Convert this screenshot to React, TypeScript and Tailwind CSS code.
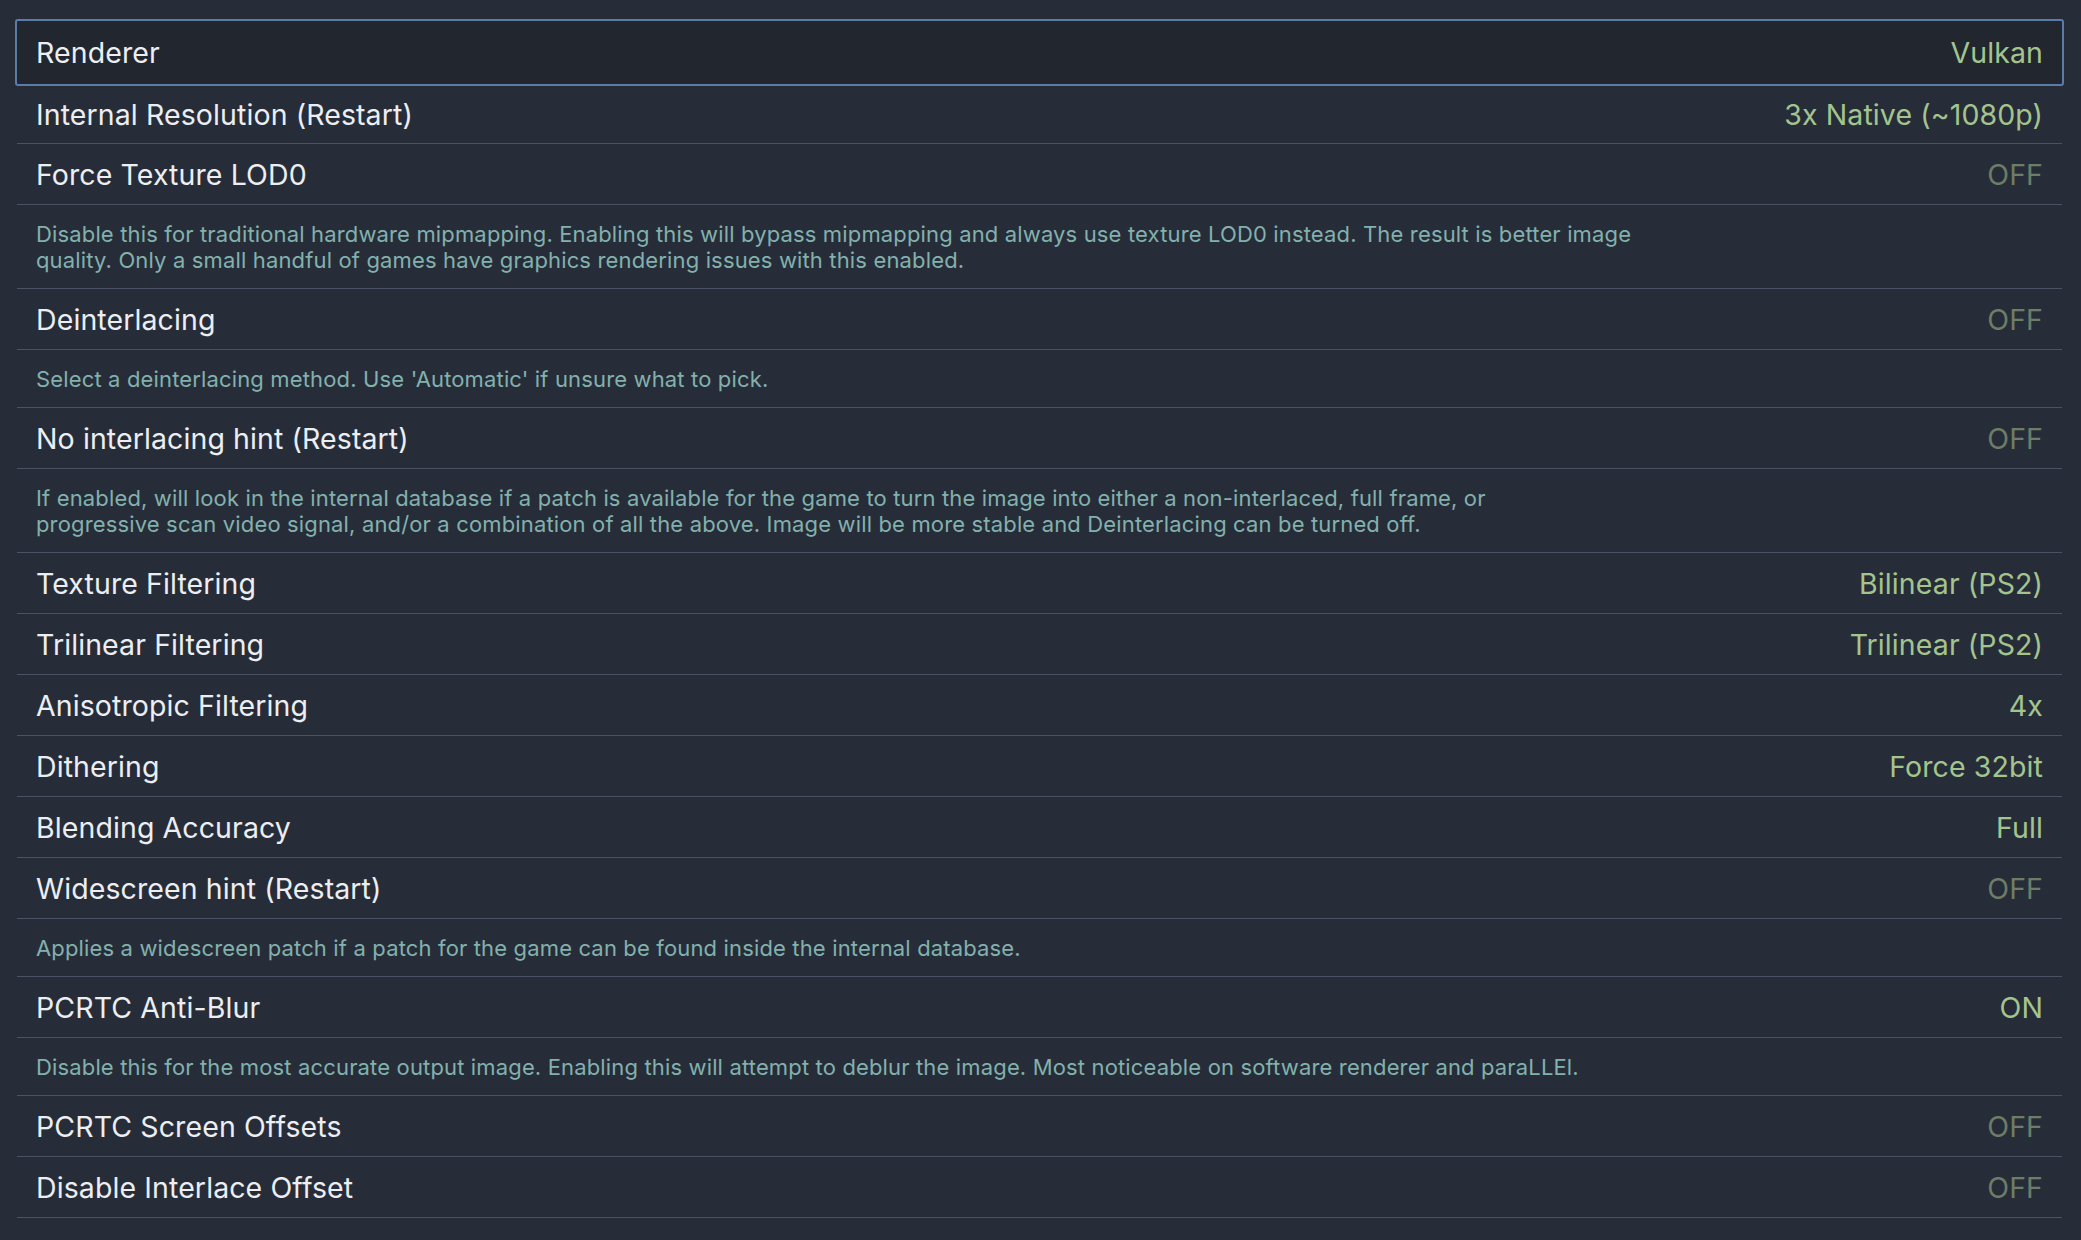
import React from "react";

type Item = {
  label: string;
  value: string;
  on?: boolean;
  desc?: string[];
  focused?: boolean;
};

const items: Item[] = [
  { label: "Renderer", value: "Vulkan", on: true, focused: true },
  { label: "Internal Resolution (Restart)", value: "3x Native (~1080p)", on: true },
  {
    label: "Force Texture LOD0",
    value: "OFF",
    desc: [
      "Disable this for traditional hardware mipmapping. Enabling this will bypass mipmapping and always use texture LOD0 instead. The result is better image",
      "quality. Only a small handful of games have graphics rendering issues with this enabled.",
    ],
  },
  {
    label: "Deinterlacing",
    value: "OFF",
    desc: ["Select a deinterlacing method. Use 'Automatic' if unsure what to pick."],
  },
  {
    label: "No interlacing hint (Restart)",
    value: "OFF",
    desc: [
      "If enabled, will look in the internal database if a patch is available for the game to turn the image into either a non-interlaced, full frame, or",
      "progressive scan video signal, and/or a combination of all the above. Image will be more stable and Deinterlacing can be turned off.",
    ],
  },
  { label: "Texture Filtering", value: "Bilinear (PS2)", on: true },
  { label: "Trilinear Filtering", value: "Trilinear (PS2)", on: true },
  { label: "Anisotropic Filtering", value: "4x", on: true },
  { label: "Dithering", value: "Force 32bit", on: true },
  { label: "Blending Accuracy", value: "Full", on: true },
  {
    label: "Widescreen hint (Restart)",
    value: "OFF",
    desc: ["Applies a widescreen patch if a patch for the game can be found inside the internal database."],
  },
  {
    label: "PCRTC Anti-Blur",
    value: "ON",
    on: true,
    desc: [
      "Disable this for the most accurate output image. Enabling this will attempt to deblur the image. Most noticeable on software renderer and paraLLEl.",
    ],
  },
  { label: "PCRTC Screen Offsets", value: "OFF" },
  { label: "Disable Interlace Offset", value: "OFF" },
];

export default function App() {
  return (
    <div
      className="min-h-screen w-full bg-[#272d38] pt-[19px] pl-[17px] pr-[19px] overflow-hidden"
      style={{ fontFamily: "Inter, 'Noto Sans', sans-serif" }}
    >
      {items.map((it, i) => (
        <div key={i}>
          {it.focused ? (
            <div className="-mx-[2px] h-[67px] flex items-center justify-between border-2 border-[#5a7ca6] rounded-[3px] bg-[#22262f] px-[19px] pt-[2px]">
              <span className="text-[28.5px] tracking-[0.1px] text-[#eceef2]">{it.label}</span>
              <span className="text-[28.5px] tracking-[0.1px] text-[#a4c48e]">{it.value}</span>
            </div>
          ) : (
            <div
              className={`flex items-center justify-between px-[19px] pt-[2px] border-b border-[#4a5264] ${
                i === 1 ? "h-[58px]" : "h-[61px]"
              }`}
            >
              <span className="text-[28.5px] tracking-[0.1px] text-[#eceef2]">{it.label}</span>
              <span
                className={`text-[28.5px] tracking-[0.1px] ${it.on ? "text-[#a4c48e]" : "text-[#6d7d67]"}`}
              >
                {it.value}
              </span>
            </div>
          )}
          {it.desc && (
            <div className="border-b border-[#4a5264] px-[19px] pt-[16px] pb-[15px]">
              {it.desc.map((line, j) => (
                <p
                  key={j}
                  className="whitespace-nowrap text-[22px] leading-[26px] tracking-[0.15px] text-[#82b1ae]"
                >
                  {line}
                </p>
              ))}
            </div>
          )}
        </div>
      ))}
    </div>
  );
}
